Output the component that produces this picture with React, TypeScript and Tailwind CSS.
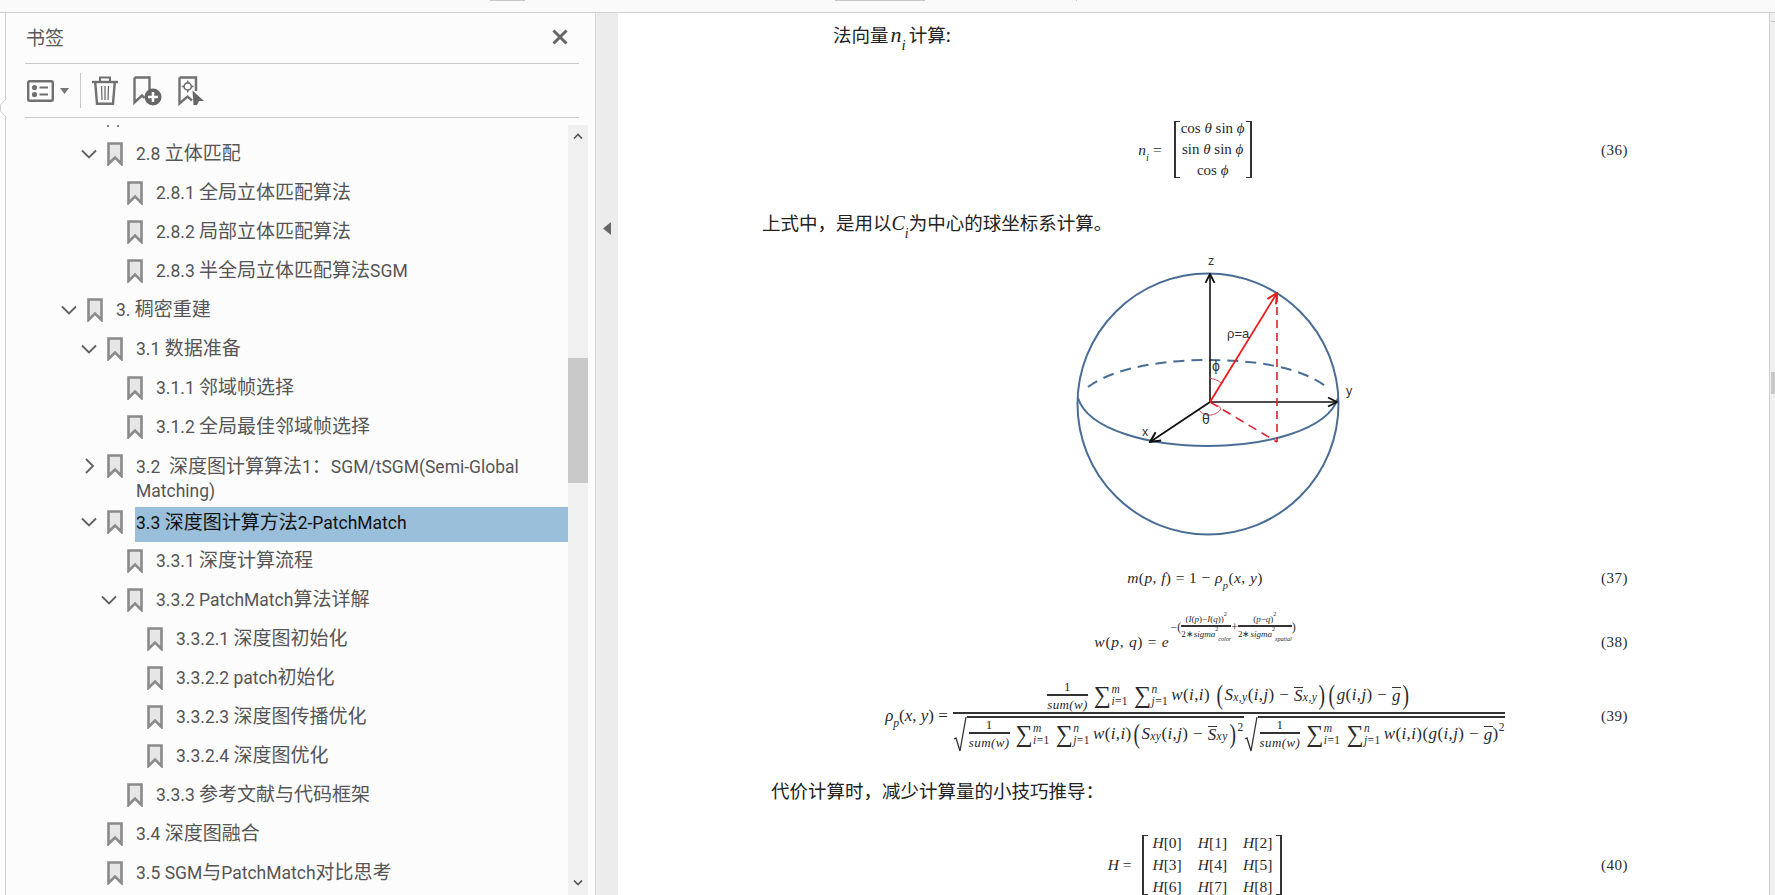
import type { ReactNode } from 'react';

const rows = [
  { level: 2, open: true, text: '2.8 立体匹配' },
  { level: 3, text: '2.8.1 全局立体匹配算法' },
  { level: 3, text: '2.8.2 局部立体匹配算法' },
  { level: 3, text: '2.8.3 半全局立体匹配算法SGM' },
  { level: 1, open: true, text: '3. 稠密重建' },
  { level: 2, open: true, text: '3.1 数据准备' },
  { level: 3, text: '3.1.1 邻域帧选择' },
  { level: 3, text: '3.1.2 全局最佳邻域帧选择' },
  { level: 2, closed: true, tall: true, text: '3.2  深度图计算算法1：SGM/tSGM(Semi-Global Matching)' },
  { level: 2, open: true, active: true, text: '3.3 深度图计算方法2-PatchMatch' },
  { level: 3, text: '3.3.1 深度计算流程' },
  { level: 3, open: true, text: '3.3.2 PatchMatch算法详解' },
  { level: 4, text: '3.3.2.1 深度图初始化' },
  { level: 4, text: '3.3.2.2 patch初始化' },
  { level: 4, text: '3.3.2.3 深度图传播优化' },
  { level: 4, text: '3.3.2.4 深度图优化' },
  { level: 3, text: '3.3.3 参考文献与代码框架' },
  { level: 2, text: '3.4 深度图融合' },
  { level: 2, text: '3.5 SGM与PatchMatch对比思考' },
];

const indent: Record<number, string> = {
  1: 'pl-[54px]',
  2: 'pl-[74px]',
  3: 'pl-[94px]',
  4: 'pl-[114px]',
};

function BookmarkIcon() {
  return (
    <svg width="16" height="24" viewBox="0 0 16 24" className="shrink-0">
      <path d="M1.5 1.5H14.5V22L8 15.5L1.5 22Z" fill="#e6e6e6" stroke="#8a8a8a" strokeWidth="2.6" />
    </svg>
  );
}

function Chevron({ right }: { right?: boolean }) {
  return (
    <svg width="18" height="24" viewBox="0 0 18 24" className="shrink-0" fill="none" stroke="#606060" strokeWidth="1.8">
      {right ? <path d="M6 5L13 12L6 19" /> : <path d="M2 8.5L9 15.5L16 8.5" />}
    </svg>
  );
}

// latin runs are set smaller than the cjk ones, like the yahei ui font in the reference
function Label({ text }: { text: string }) {
  return (
    <>
      {text.split(/([\x00-\x7f]+)/).map((run, i) =>
        /^[\x00-\x7f]+$/.test(run) ? (
          <span key={i} className="font-['Roboto'] text-[17.5px]">
            {run}
          </span>
        ) : (
          <span key={i}>{run}</span>
        ),
      )}
    </>
  );
}

function BookmarkRow({ row }: { row: (typeof rows)[number] }) {
  const iconTop = row.active ? 'mt-[3px]' : 'mt-[6px]';
  const rowHeight = row.tall ? 'h-[59px]' : row.active ? 'h-[36px]' : 'h-[39px]';
  const textBox = row.tall
    ? 'pt-[6px] leading-[22px]'
    : row.active
      ? 'h-[35px] pt-px leading-[25px]'
      : 'h-[35px] pt-[3px] leading-[25px]';
  return (
    <div className={`flex items-start ${indent[row.level]} ${rowHeight}`}>
      <div className={`w-[18px] shrink-0 ${iconTop}`}>
        {row.open && <Chevron />}
        {row.closed && <Chevron right />}
      </div>
      <div className={`ml-[9px] ${iconTop}`}>
        <BookmarkIcon />
      </div>
      <div
        className={`ml-[12px] flex-1 pl-px whitespace-pre-wrap ${textBox} ${
          row.active ? 'bg-[#9abfda] text-[#111]' : 'text-[#555]'
        }`}
      >
        <Label text={row.text} />
      </div>
    </div>
  );
}

function Toolbar() {
  return (
    <div className="flex items-center h-[54px] border-b border-[#c8c8c8] pl-[2px]">
      <svg width="27" height="22" viewBox="0 0 27 22" fill="none">
        <rect x="1.2" y="1.2" width="24.6" height="19.6" rx="1.5" stroke="#707070" strokeWidth="2.4" />
        <circle cx="7.5" cy="7.5" r="2.6" fill="#707070" />
        <circle cx="7.5" cy="14.5" r="2.6" fill="#707070" />
        <path d="M12.5 7.5H21M12.5 14.5H21" stroke="#707070" strokeWidth="2.2" />
      </svg>
      <svg width="9" height="6" viewBox="0 0 9 6" className="ml-[6px]">
        <path d="M0 0H9L4.5 6Z" fill="#777" />
      </svg>
      <div className="w-px h-[35px] bg-[#c8c8c8] ml-[11px]" />
      <svg width="26" height="29" viewBox="0 0 26 29" fill="none" className="ml-[11px]" stroke="#707070">
        <path d="M0 6H26" strokeWidth="2.4" />
        <path d="M8 5V1.5H18V5" strokeWidth="2" />
        <path d="M3.2 6L5 27.8H21L22.8 6" strokeWidth="2.4" />
        <path d="M9.5 10L10 24M13 10V24M16.5 10L16 24" strokeWidth="1.3" />
      </svg>
      <svg width="29" height="30" viewBox="0 0 29 30" fill="none" className="ml-[15px]">
        <path d="M1.5 1.5H16.5V14M1.5 1.5V26.5L9 19.5L11.5 22" stroke="#707070" strokeWidth="2.4" />
        <circle cx="20" cy="21" r="8.5" fill="#666" />
        <path d="M20 16V26M15 21H25" stroke="#fff" strokeWidth="2.6" />
      </svg>
      <svg width="26" height="30" viewBox="0 0 26 30" fill="none" className="ml-[16px]">
        <path d="M1.5 1.5H18V15M1.5 1.5V27.5L9.5 20.5L14 24.5" stroke="#707070" strokeWidth="2.4" />
        <circle cx="9.7" cy="10.5" r="3.6" stroke="#707070" strokeWidth="1.6" />
        <path d="M9.7 4.5V7M9.7 14V16.5M3.7 10.5H6.2M13.2 10.5H15.7" stroke="#707070" strokeWidth="1.4" />
        <path d="M14.5 14.5L26 25H21L19 29H15.5Z" fill="#666" />
      </svg>
    </div>
  );
}

function Scrollbar() {
  return (
    <div className="w-[20px] mt-[7px] bg-[#f0f0f0] flex flex-col items-center shrink-0">
      <svg width="10" height="6" viewBox="0 0 10 6" fill="none" stroke="#555" strokeWidth="1.6" className="mt-[8px] shrink-0">
        <path d="M1 5.5L5 1.5L9 5.5" />
      </svg>
      <div className="w-full h-[125px] mt-[219px] bg-[#c9c9c9] shrink-0" />
      <div className="flex-1" />
      <svg width="10" height="6" viewBox="0 0 10 6" fill="none" stroke="#555" strokeWidth="1.6" className="mb-[9px] shrink-0">
        <path d="M1 .5L5 4.5L9 .5" />
      </svg>
    </div>
  );
}

function BookmarkPanel() {
  return (
    <div className="w-[589px] shrink-0 bg-[#fcfcfc] flex flex-col font-['Noto_Sans_CJK_SC',sans-serif] text-[19px]">
      <div className="mx-[19px] w-[554px]">
        <div className="flex items-center justify-between h-[51px] border-b border-[#c8c8c8] pl-px pr-[11px] pb-[2px]">
          <span className="text-[#5a5a5a]">书签</span>
          <svg width="16" height="16" viewBox="0 0 16 16" stroke="#666" strokeWidth="3">
            <path d="M1.5 1.5L14.5 14.5M14.5 1.5L1.5 14.5" />
          </svg>
        </div>
        <Toolbar />
      </div>
      <div className="flex flex-1 min-h-0 overflow-hidden">
        <div className="flex-1 min-w-0 overflow-hidden mr-[-1px] pt-[7px]">
          <div className="h-[11px] pl-[101px] flex gap-[8px] items-start">
            <div className="w-[2px] h-[2px] bg-[#8a8a8a]" />
            <div className="w-[2px] h-[2px] bg-[#8a8a8a]" />
          </div>
          {rows.map((row) => (
            <BookmarkRow key={row.text} row={row} />
          ))}
        </div>
        <Scrollbar />
        <div className="w-[7px] shrink-0" />
      </div>
    </div>
  );
}

function I({ children }: { children: ReactNode }) {
  return <i>{children}</i>;
}

function Sub({ children }: { children: ReactNode }) {
  return <sub className="text-[0.68em] align-[-0.3em] leading-none">{children}</sub>;
}

function Sup({ children }: { children: ReactNode }) {
  return <sup className="text-[0.68em] align-[0.5em] leading-none">{children}</sup>;
}

function EqRow({ no, className, children }: { no: string; className: string; children: ReactNode }) {
  return (
    <div className={`grid grid-cols-[1fr_auto_1fr] items-center font-['Liberation_Serif',serif] text-[15.5px] text-[#2a2a2a] whitespace-nowrap ${className}`}>
      <div />
      <div className="flex items-center">{children}</div>
      <div className="justify-self-end text-[15px] tracking-[0.5px]">{no}</div>
    </div>
  );
}

function Bracket({ right }: { right?: boolean }) {
  return (
    <div className={`w-[6px] self-stretch my-[3px] border-y border-[#333] ${right ? 'border-r-2' : 'border-l-2'}`} />
  );
}

function Frac({ top, bottom, className }: { top: ReactNode; bottom: ReactNode; className?: string }) {
  return (
    <span className={`inline-flex flex-col items-center leading-none ${className ?? ''}`}>
      <span className="pb-[1px]">{top}</span>
      <span className="self-stretch border-t-2 border-[#333]" />
      <span className="pt-[2px]">{bottom}</span>
    </span>
  );
}

function Sum({ to, from }: { to: string; from: string }) {
  return (
    <span className="inline-flex items-center mx-[3px]">
      <span className="text-[24px] leading-none">∑</span>
      <span className="inline-flex flex-col text-[11.5px] leading-[12px]">
        <i>{to}</i>
        <span>
          <i>{from}</i>=1
        </span>
      </span>
    </span>
  );
}

function OneOverSum() {
  return <Frac className="text-[13px] mr-[3px]" top="1" bottom={<I>sum(w)</I>} />;
}

function Bar({ children }: { children: ReactNode }) {
  return <span className="border-t border-[#333] leading-[15px] inline-block">{children}</span>;
}

function BigParen({ children }: { children: string }) {
  return <span className="text-[28px] leading-none font-light scale-x-[0.7] inline-block">{children}</span>;
}

function Radical({ children }: { children: ReactNode }) {
  return (
    <span className="inline-flex items-stretch">
      <svg width="14" height="36" viewBox="0 0 14 36" fill="none" stroke="#333" className="shrink-0">
        <path d="M1 23L3 22L7 35L13 1" strokeWidth="1.3" />
      </svg>
      <span className="inline-flex items-center border-t-2 border-[#333] pl-[2px] h-[33px]">{children}</span>
    </span>
  );
}

function Sphere() {
  return (
    <svg width="340" height="300" viewBox="0 0 340 300" fill="none" className="ml-[278px] mt-[15px] block">
      <defs>
        <marker id="blackHead" viewBox="0 0 10 10" refX="9" refY="5" markerWidth="7" markerHeight="7" orient="auto">
          <path d="M1 1L9 5L1 9" stroke="#111" strokeWidth="1.6" fill="none" />
        </marker>
        <marker id="redHead" viewBox="0 0 10 10" refX="9" refY="5" markerWidth="7" markerHeight="7" orient="auto">
          <path d="M1 1L9 5L1 9" stroke="#f01818" strokeWidth="1.6" fill="none" />
        </marker>
      </defs>
      <circle cx="168" cy="152" r="130.5" stroke="#4a6d96" strokeWidth="2" />
      <path d="M38 146C48 178 110 194 168 194C226 194 288 178 298 146" stroke="#4a6d96" strokeWidth="2" />
      <path d="M48 135C75 115 125 108 168 108C215 108 262 115 288 136" stroke="#4a6d96" strokeWidth="2" strokeDasharray="11 7" />
      <path d="M170 150V22" stroke="#111" strokeWidth="1.6" markerEnd="url(#blackHead)" />
      <path d="M170 150H297" stroke="#111" strokeWidth="1.6" markerEnd="url(#blackHead)" />
      <path d="M170 150L110 190" stroke="#111" strokeWidth="1.8" markerEnd="url(#blackHead)" />
      <path d="M170 150L237 41" stroke="#f01818" strokeWidth="1.8" markerEnd="url(#redHead)" />
      <path d="M237 42V190" stroke="#dc2030" strokeWidth="1.6" strokeDasharray="8 5" />
      <path d="M170 150L237 190" stroke="#dc2030" strokeWidth="1.6" strokeDasharray="9 6" />
      <path d="M169 126C174 127 178 128 181 131" stroke="#e04050" strokeWidth="1" />
      <path d="M159 158C165 166 176 164 181 157C180 155 178 153 176 153" stroke="#e04050" strokeWidth="1" />
      <g className="font-['Liberation_Sans',sans-serif]" fill="#333" fontSize="12.5">
        <text x="168" y="13">z</text>
        <text x="306" y="143">y</text>
        <text x="102" y="184">x</text>
        <text x="187" y="86" fontSize="13">ρ=a</text>
        <text x="172" y="119" fontSize="14">ϕ</text>
        <text x="162" y="172" fontSize="14">θ</text>
      </g>
    </svg>
  );
}

function PdfPage() {
  return (
    <div className="flex-1 min-w-0 bg-white pl-[144px] pr-[141px] overflow-hidden font-['Noto_Sans_CJK_SC',sans-serif] text-[18.5px] text-[#222] leading-[26px] whitespace-nowrap">
      <p className="ml-[71px] mt-[8px]">
        法向量<span className="font-['Liberation_Serif',serif] text-[22px] ml-[2px] mr-[3px]"><I>n</I><Sub><I>i</I></Sub></span>计算:
      </p>

      <EqRow no="(36)" className="mt-[69px] h-[63px]">
        <span className="mr-[12px]"><I>n</I><Sub><I>i</I></Sub> =</span>
        <Bracket />
        <div className="grid grid-rows-3 text-center text-[15px] leading-[21px] px-[1px] w-[66px]">
          <span>cos <I>θ</I> sin <I>ϕ</I></span>
          <span>sin <I>θ</I> sin <I>ϕ</I></span>
          <span>cos <I>ϕ</I></span>
        </div>
        <Bracket right />
      </EqRow>

      <p className="mt-[28px]">
        上式中，是用以<span className="font-['Liberation_Serif',serif] text-[20px]"><I>C</I><Sub><I>i</I></Sub></span>为中心的球坐标系计算。
      </p>

      <Sphere />

      <EqRow no="(37)" className="mt-[13px] h-[24px] tracking-[0.4px]">
        <span>
          <I>m</I>(<I>p</I>, <I>f</I>) = 1 − <I>ρ</I><Sub><I>p</I></Sub>(<I>x</I>, <I>y</I>)
        </span>
      </EqRow>

      <EqRow no="(38)" className="mt-[34px] h-[38px]">
        <span className="tracking-[0.7px]">
          <I>w</I>(<I>p</I>, <I>q</I>) = <I>e</I>
        </span>
        <span className="flex items-center text-[9px] -translate-y-[15px] ml-[1px]">
          <span className="text-[12px]">−(</span>
          <Frac top={<>(<I>I</I>(<I>p</I>)−<I>I</I>(<I>q</I>))<Sup>2</Sup></>} bottom={<>2∗<I>sigma</I><Sup>2</Sup><Sub><I>color</I></Sub></>} />
          <span className="text-[12px]">+</span>
          <Frac top={<>(<I>p</I>−<I>q</I>)<Sup>2</Sup></>} bottom={<>2∗<I>sigma</I><Sup>2</Sup><Sub><I>spatial</I></Sub></>} />
          <span className="text-[12px]">)</span>
        </span>
      </EqRow>

      <EqRow no="(39)" className="mt-[19px] h-[66px]">
        <span className="mr-[5px] text-[17px]">
          <I>ρ</I><Sub><I>p</I></Sub>(<I>x</I>, <I>y</I>) =
        </span>
        <span className="inline-flex flex-col items-center text-[17px] tracking-[0.4px]">
          <span className="flex items-center h-[32px] pb-[2px]">
            <OneOverSum />
            <Sum to="m" from="i" />
            <Sum to="n" from="j" />
            <I>w</I>(<I>i</I>, <I>i</I>)&nbsp;
            <BigParen>(</BigParen>
            <I>S</I><Sub><I>x,y</I></Sub>(<I>i</I>, <I>j</I>)&nbsp;−&nbsp;<Bar><I>S</I></Bar><Sub><I>x,y</I></Sub>
            <BigParen>)</BigParen>
            <BigParen>(</BigParen>
            <I>g</I>(<I>i</I>, <I>j</I>)&nbsp;−&nbsp;<Bar><I>g</I></Bar>
            <BigParen>)</BigParen>
          </span>
          <span className="self-stretch border-t-2 border-[#333]" />
          <span className="flex items-center pt-[2px]">
            <Radical>
              <OneOverSum />
              <Sum to="m" from="i" />
              <Sum to="n" from="j" />
              <I>w</I>(<I>i</I>, <I>i</I>)
              <BigParen>(</BigParen>
              <I>S</I><Sub><I>xy</I></Sub>(<I>i</I>, <I>j</I>)&nbsp;−&nbsp;<Bar><I>S</I></Bar><Sub><I>xy</I></Sub>
              <BigParen>)</BigParen>
              <Sup>2</Sup>
            </Radical>
            <Radical>
              <OneOverSum />
              <Sum to="m" from="i" />
              <Sum to="n" from="j" />
              <I>w</I>(<I>i</I>, <I>i</I>)(<I>g</I>(<I>i</I>, <I>j</I>)&nbsp;−&nbsp;<Bar><I>g</I></Bar>)<Sup>2</Sup>
            </Radical>
          </span>
        </span>
      </EqRow>

      <p className="ml-[9px] mt-[31px]">代价计算时，减少计算量的小技巧推导：</p>

      <EqRow no="(40)" className="mt-[29px] h-[66px]">
        <span className="mr-[11px]"><I>H</I> =</span>
        <Bracket />
        <div className="grid grid-cols-3 gap-x-[16px] leading-[22px] px-[4px]">
          {[0, 1, 2, 3, 4, 5, 6, 7, 8].map((n) => (
            <span key={n}>
              <I>H</I>[{n}]
            </span>
          ))}
        </div>
        <Bracket right />
      </EqRow>
    </div>
  );
}

export default function App() {
  return (
    <div className="w-[1775px] h-[895px] flex flex-col overflow-hidden bg-white relative">
      <div className="h-[13px] shrink-0 bg-[#fafafa] border-b border-[#cfcfcf] flex">
        <div className="w-[490px] shrink-0" />
        <div className="w-[35px] h-px bg-[#c8c8c8]" />
        <div className="w-[310px] shrink-0" />
        <div className="w-[90px] h-px bg-[#c8c8c8]" />
        <div className="w-[151px] shrink-0" />
        <div className="w-px h-px bg-[#c8c8c8]" />
      </div>
      <div className="flex flex-1 min-h-0">
        <div className="w-[6px] shrink-0 border-r border-[#cfcfcf]" />
        <BookmarkPanel />
        <div className="w-[23px] shrink-0 bg-[#ececec] border-l border-[#d8d8d8] flex items-center justify-center pb-[451px]">
          <svg width="8" height="13" viewBox="0 0 8 13">
            <path d="M8 0V13L0 6.5Z" fill="#666" />
          </svg>
        </div>
        <PdfPage />
        <div className="w-[6px] shrink-0 bg-[#f0f0f0] border-l border-[#cfcfcf] flex flex-col pl-[1px]">
          <div className="h-[9px] bg-[#f0f0f0] border-b border-[#c8c8c8]" />
          <div className="h-[350px]" />
          <div className="h-[22px] bg-[#c9c9c9]" />
        </div>
      </div>
      {/* little tab notch on the panel edge */}
      <svg width="7" height="20" viewBox="0 0 7 20" className="absolute left-0 top-[98px]">
        <path d="M6.5 0L0.5 7V13L6.5 20" fill="#fff" stroke="#cfcfcf" />
      </svg>
    </div>
  );
}
